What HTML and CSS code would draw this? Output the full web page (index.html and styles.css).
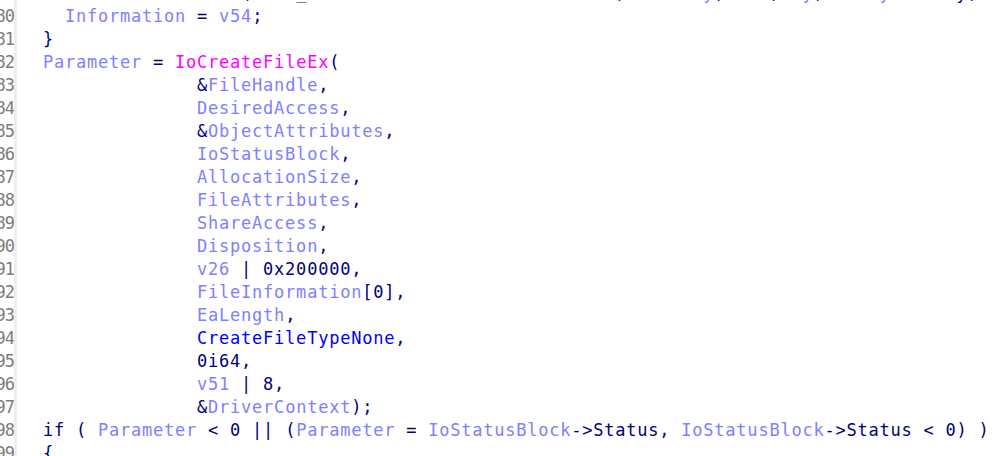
FILE: index.html
```html
<!DOCTYPE html>
<html>
<head>
<meta charset="utf-8">
<link rel="stylesheet" href="styles.css">
</head>
<body>
<div class="view">
  <div class="row"><span class="ln">79</span><span class="code">    <span class="f">ExAllocateHeader</span>(<span class="v">Mask</span>_<span class="v">RESOURCE</span> + <span class="v">DesiredAccess</span> * 4, <span class="v">Datakey</span>, <span class="v">v53</span>, <span class="v">Hy</span>, <span class="v">Entry</span>-&gt;Tally, <span class="v">v50</span>);</span></div>
  <div class="row"><span class="ln">80</span><span class="code">    <span class="v">Information</span> = <span class="v">v54</span>;</span></div>
  <div class="row"><span class="ln">81</span><span class="code">  }</span></div>
  <div class="row"><span class="ln">82</span><span class="code">  <span class="v">Parameter</span> = <span class="f">IoCreateFileEx</span>(</span></div>
  <div class="row"><span class="ln">83</span><span class="code">                &amp;<span class="v">FileHandle</span>,</span></div>
  <div class="row"><span class="ln">84</span><span class="code">                <span class="v">DesiredAccess</span>,</span></div>
  <div class="row"><span class="ln">85</span><span class="code">                &amp;<span class="v">ObjectAttributes</span>,</span></div>
  <div class="row"><span class="ln">86</span><span class="code">                <span class="v">IoStatusBlock</span>,</span></div>
  <div class="row"><span class="ln">87</span><span class="code">                <span class="v">AllocationSize</span>,</span></div>
  <div class="row"><span class="ln">88</span><span class="code">                <span class="v">FileAttributes</span>,</span></div>
  <div class="row"><span class="ln">89</span><span class="code">                <span class="v">ShareAccess</span>,</span></div>
  <div class="row"><span class="ln">90</span><span class="code">                <span class="v">Disposition</span>,</span></div>
  <div class="row"><span class="ln">91</span><span class="code">                <span class="v">v26</span> | 0x200000,</span></div>
  <div class="row"><span class="ln">92</span><span class="code">                <span class="v">FileInformation</span>[0],</span></div>
  <div class="row"><span class="ln">93</span><span class="code">                <span class="v">EaLength</span>,</span></div>
  <div class="row"><span class="ln">94</span><span class="code">                <span class="c">CreateFileTypeNone</span>,</span></div>
  <div class="row"><span class="ln">95</span><span class="code">                0i64,</span></div>
  <div class="row"><span class="ln">96</span><span class="code">                <span class="v">v51</span> | 8,</span></div>
  <div class="row"><span class="ln">97</span><span class="code">                &amp;<span class="v">DriverContext</span>);</span></div>
  <div class="row"><span class="ln">98</span><span class="code">  if ( <span class="v">Parameter</span> &lt; 0 || (<span class="v">Parameter</span> = <span class="v">IoStatusBlock</span>-&gt;Status, <span class="v">IoStatusBlock</span>-&gt;Status &lt; 0) )</span></div>
  <div class="row"><span class="ln">99</span><span class="code">  {</span></div>
</div>
</body>
</html>
```
FILE: styles.css
```css
html, body {
  margin: 0;
  padding: 0;
  background: #ffffff;
  overflow: hidden;
}
.view {
  display: flex;
  flex-direction: column;
  margin-top: -18px;
  font-family: "DejaVu Sans Mono", "Liberation Mono", monospace;
  font-size: 17px;
  letter-spacing: 0.77px;
  color: #000080;
}
.row {
  display: flex;
  height: 23px;
  line-height: 23px;
  white-space: pre;
}
.ln {
  flex: 0 0 17px;
  box-sizing: border-box;
  text-align: right;
  padding-right: 0;
  color: #7c7c7c;
  overflow: hidden;
  direction: rtl;
  letter-spacing: -1px;
  border-right: 3px solid #ededed;
}
.code {
  padding-left: 4px;
}
.v { color: #8080ff; }
.f { color: #ff00ff; }
.c { color: #0000ff; }
```
